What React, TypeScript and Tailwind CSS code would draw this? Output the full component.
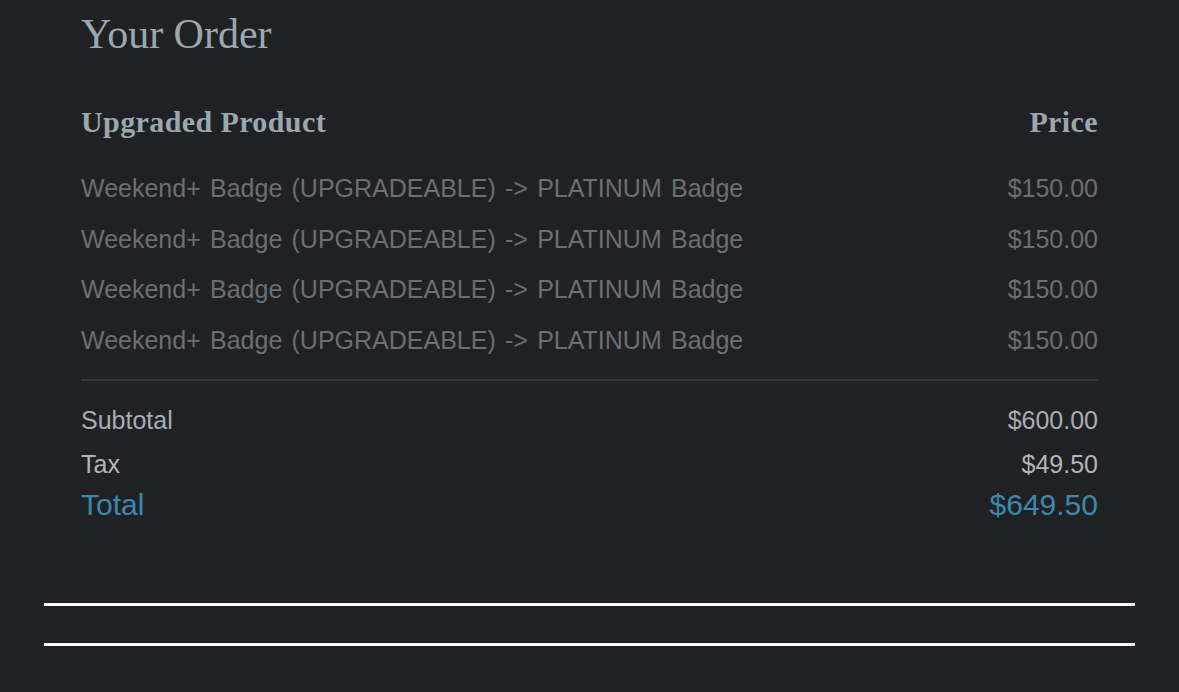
const items = [
  { name: "Weekend+ Badge (UPGRADEABLE) -> PLATINUM Badge", price: "$150.00" },
  { name: "Weekend+ Badge (UPGRADEABLE) -> PLATINUM Badge", price: "$150.00" },
  { name: "Weekend+ Badge (UPGRADEABLE) -> PLATINUM Badge", price: "$150.00" },
  { name: "Weekend+ Badge (UPGRADEABLE) -> PLATINUM Badge", price: "$150.00" },
]

export default function App() {
  return (
    <div className="min-h-[692px] w-full bg-[#202124] font-['Liberation_Sans',Arial,sans-serif]">
      <div className="px-[81px] pt-[9px]">
        <h1 className="font-['Liberation_Serif','Times_New_Roman',serif] text-[42px] leading-[50px] text-[#9ba8b0]">
          Your Order
        </h1>

        <div className="mt-[43px] flex justify-between font-['Liberation_Serif','Times_New_Roman',serif] text-[30px] font-bold leading-[40px] tracking-[0.4px] text-[#9aa7af]">
          <span>Upgraded Product</span>
          <span>Price</span>
        </div>

        <div className="mt-[21px]">
          {items.map((item, i) => (
            <div
              key={i}
              className="flex justify-between text-[25px] leading-[50.7px] text-[#6b6e72] [word-spacing:2.3px]"
            >
              <span>{item.name}</span>
              <span>{item.price}</span>
            </div>
          ))}
        </div>

        <div className="mt-[13px] h-[2px] bg-[#36383b]" />

        <div className="mt-[18px]">
          <div className="flex justify-between text-[25px] leading-[43px] text-[#a7aeb3]">
            <span>Subtotal</span>
            <span>$600.00</span>
          </div>
          <div className="flex justify-between text-[25px] leading-[44px] text-[#b0b5b9]">
            <span>Tax</span>
            <span>$49.50</span>
          </div>
          <div className="flex justify-between text-[30px] leading-[38px] text-[#3b89ad]">
            <span>Total</span>
            <span>$649.50</span>
          </div>
        </div>
      </div>

      <div className="mx-[44px] mt-[79px] h-[3px] bg-white" />
      <div className="mx-[44px] mt-[37px] h-[3px] bg-white" />
    </div>
  )
}
